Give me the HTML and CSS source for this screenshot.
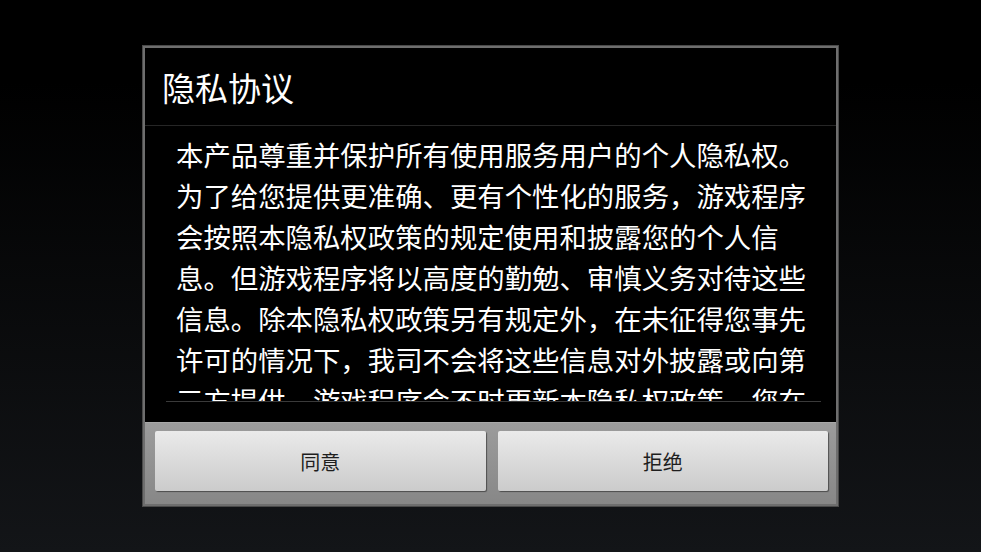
FILE: index.html
```html
<!DOCTYPE html>
<html lang="zh-CN">
<head>
<meta charset="utf-8">
<title>隐私协议</title>
<link rel="stylesheet" href="styles.css">
</head>
<body>
<div class="screen">
  <div class="dialog">
    <div class="title">隐私协议</div>
    <div class="content">
      <div class="scroller">
        <p class="text">本产品尊重并保护所有使用服务用户的个人隐私权。为了给您提供更准确、更有个性化的服务，游戏程序会按照本隐私权政策的规定使用和披露您的个人信息。但游戏程序将以高度的勤勉、审慎义务对待这些信息。除本隐私权政策另有规定外，在未征得您事先许可的情况下，我司不会将这些信息对外披露或向第三方提供。游戏程序会不时更新本隐私权政策。您在同意游戏程序服务使用协议之时，即视为您已经同意本隐私权政策全部内容。</p>
      </div>
    </div>
    <div class="buttons">
      <button class="btn">同意</button>
      <button class="btn">拒绝</button>
    </div>
  </div>
</div>
</body>
</html>
```

FILE: styles.css
```css
html, body {
  margin: 0;
  padding: 0;
}
body {
  width: 981px;
  height: 552px;
  overflow: hidden;
  background: linear-gradient(to bottom, #000 0%, #000 15%, #131518 100%);
  font-family: "Noto Sans CJK SC", "Noto Sans", sans-serif;
}
.screen {
  width: 981px;
  height: 552px;
  display: flex;
  align-items: center;
  justify-content: center;
}
.dialog {
  width: 691px;
  height: 456px;
  border: 2px solid #6e6e6e;
  outline: 1px solid #4a4a4a;
  display: flex;
  flex-direction: column;
  background: #000;
}
.title {
  height: 78px;
  flex: none;
  display: flex;
  align-items: center;
  padding-left: 17px;
  box-sizing: border-box;
  color: #fff;
  font-size: 33px;
  border-bottom: 1px solid #262626;
}
.content {
  flex: none;
  height: 296px;
  box-sizing: border-box;
  padding: 0 15px 20px 21px;
  display: flex;
  flex-direction: column;
}
.scroller {
  flex: 1;
  overflow: hidden;
  border-bottom: 1px solid #3a3a3a;
  padding: 8px 14px 0 10px;
}
.text {
  margin: 0;
  color: #fff;
  font-size: 27.4px;
  line-height: 41px;
}
.buttons {
  flex: 1;
  display: flex;
  gap: 12px;
  padding: 8px 8px 13px 10px;
  box-sizing: border-box;
  background: linear-gradient(to bottom, #9c9c9c, #878787);
  border-top: 1px solid #a8a8a8;
}
.btn {
  flex: 1;
  margin: 0;
  border: none;
  border-radius: 2px;
  background: linear-gradient(to bottom, #eaeaea, #cbcbcb);
  box-shadow: 1px 1px 1px rgba(0, 0, 0, 0.45);
  font-family: "Noto Sans CJK SC", "Noto Sans", sans-serif;
  font-size: 20px;
  color: #1e1e1e;
  padding: 0;
}
```
